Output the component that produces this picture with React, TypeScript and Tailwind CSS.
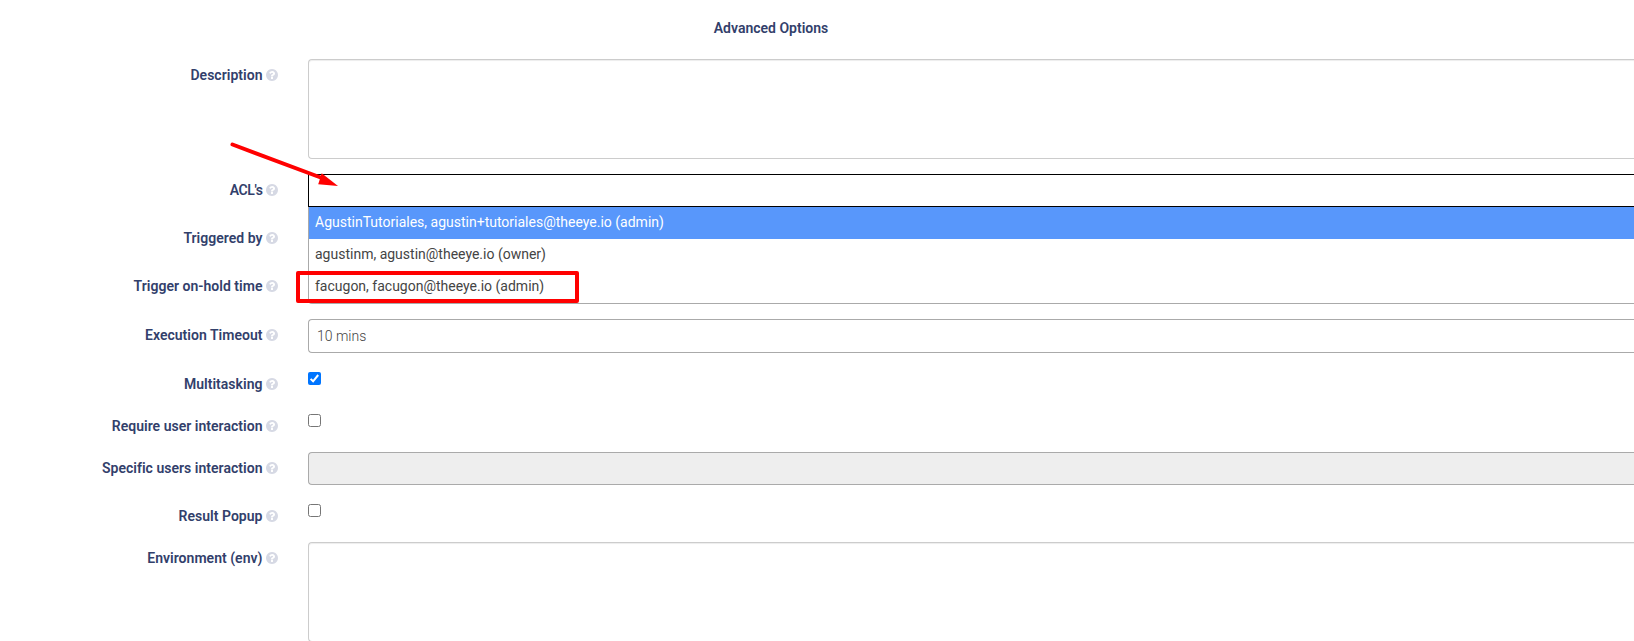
import type { ReactNode } from "react";

function HelpIcon() {
  return (
    <svg viewBox="0 0 1536 1536" className="size-3 shrink-0 fill-[#d6d9e4]" aria-hidden="true">
      <path d="M896 1248v-192q0-14-9-23t-23-9h-192q-14 0-23 9t-9 23v192q0 14 9 23t23 9h192q14 0 23-9t9-23zM1152 576q0-88-55.5-163t-138.5-116-170-41q-243 0-371 213-15 24 8 42l132 100q7 6 19 6 16 0 25-12 53-68 86-92 34-24 86-24 48 0 85.5 26t37.5 59q0 38-20 61t-68 45q-63 28-115.5 86.5t-52.5 125.5v36q0 14 9 23t23 9h192q14 0 23-9t9-23q0-19 21.5-49.5t54.5-49.5q32-18 49-28.5t46-35 44.5-48 28-60.5 12.5-81zM1536 768q0 209-103 385.5t-279.5 279.5-385.5 103-385.5-103-279.5-279.5-103-385.5 103-385.5 279.5-279.5 385.5-103 385.5 103 279.5 279.5 103 385.5z" />
    </svg>
  );
}

function Row({
  label,
  tracking = "tracking-[0.025px]",
  children,
}: {
  label: string;
  tracking?: string;
  children: ReactNode;
}) {
  return (
    <div className="flex items-start">
      <div className="flex h-[26px] w-[278px] shrink-0 items-center justify-end gap-[3.5px] pt-[6px] leading-5 font-semibold whitespace-nowrap">
        <span className={tracking}>{label}</span>
        <HelpIcon />
      </div>
      <div className="ml-[30px] min-w-0 flex-1">{children}</div>
    </div>
  );
}

function Check({ checked = false }: { checked?: boolean }) {
  return (
    <div className="h-[27px] pt-1">
      {checked ? (
        <div className="size-[13px] rounded-[2px] bg-[#0075ff]">
          <svg viewBox="0 0 13 13" className="size-[13px] fill-none stroke-white stroke-2">
            <path d="M2.6 6.9 5.1 9.3 10.2 3" />
          </svg>
        </div>
      ) : (
        <div className="size-[13px] rounded-[2.5px] border border-[#767676] bg-white" />
      )}
    </div>
  );
}

const textarea =
  "h-[100px] rounded-l border border-r-0 border-[#ccc] bg-white shadow-[inset_0_1px_1px_rgba(0,0,0,0.075)]";

export default function App() {
  return (
    <main className="h-[641px] w-full overflow-hidden bg-white font-['Roboto',sans-serif] text-[14px] text-[#32406b]">
      <h2 className="w-[1542px] pt-[18px] text-center leading-5 font-semibold">Advanced Options</h2>
      <form className="mt-[21px] flex flex-col gap-[15px]">
        <Row label="Description">
          <div className={textarea} />
        </Row>
        <Row label="ACL's" tracking="tracking-[-0.4px]">
          <div className="relative">
            <div className="h-[33px] border border-r-0 border-black bg-white" />
            <ul className="absolute top-[33px] right-0 left-0 z-10 rounded-bl border-b border-l border-[#aaa] bg-white text-[#444] leading-5">
              <li className="h-8 bg-[#5897fb] px-1.5 pt-[5px] text-white">
                AgustinTutoriales, agustin+tutoriales@theeye.io (admin)
              </li>
              <li className="h-8 px-1.5 pt-[5px]">agustinm, agustin@theeye.io (owner)</li>
              <li className="h-8 px-1.5 pt-[5px]">facugon, facugon@theeye.io (admin)</li>
            </ul>
            <div className="absolute top-[97px] left-[-12px] z-20 h-[32px] w-[283px] rounded-[2px] border-4 border-[#f00]" />
            <svg
              viewBox="0 0 110 48"
              className="absolute top-[-33px] left-[-78px] z-20 h-[48px] w-[110px] fill-[#f00] stroke-[#f00]"
              aria-hidden="true"
            >
              <path d="M2.500 3.500 92 37" strokeWidth="4" strokeLinecap="round" />
              <path d="M108 45 91.700 32.200 88.200 43.300Z" stroke="none" />
            </svg>
          </div>
        </Row>
        <Row label="Triggered by">
          <div className="h-[33px]" />
        </Row>
        <Row label="Trigger on-hold time">
          <div className="h-[34px]" />
        </Row>
        <Row label="Execution Timeout">
          <div className="h-[34px] rounded-l border border-r-0 border-[#aaa] bg-white pt-[6px] pl-2 leading-5 font-light text-[#444]">
            10 mins
          </div>
        </Row>
        <Row label="Multitasking">
          <Check checked />
        </Row>
        <Row label="Require user interaction">
          <Check />
        </Row>
        <Row label="Specific users interaction">
          <div className="h-[33px] rounded-l border border-r-0 border-[#aaa] bg-[#eee]" />
        </Row>
        <Row label="Result Popup">
          <Check />
        </Row>
        <Row label="Environment (env)">
          <div className={textarea} />
        </Row>
      </form>
    </main>
  );
}
